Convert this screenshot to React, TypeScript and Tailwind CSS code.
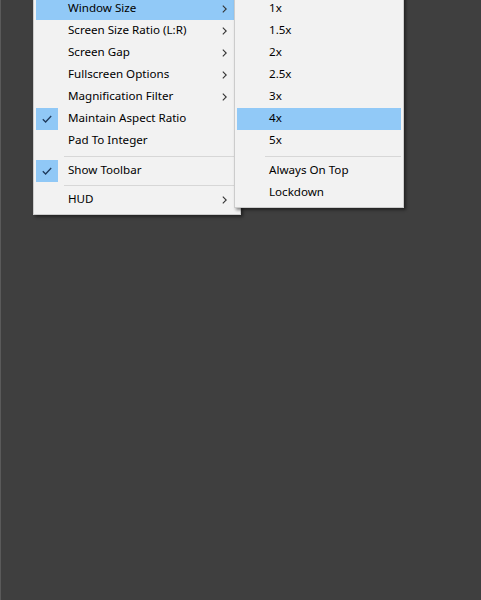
import React from "react";

type Item =
  | { kind: "item"; label: string; checked?: boolean; sub?: boolean; active?: boolean }
  | { kind: "sep"; h: string };

const mainMenu: Item[] = [
  { kind: "item", label: "Window Size", sub: true, active: true },
  { kind: "item", label: "Screen Size Ratio (L:R)", sub: true },
  { kind: "item", label: "Screen Gap", sub: true },
  { kind: "item", label: "Fullscreen Options", sub: true },
  { kind: "item", label: "Magnification Filter", sub: true },
  { kind: "item", label: "Maintain Aspect Ratio", checked: true },
  { kind: "item", label: "Pad To Integer" },
  { kind: "sep", h: "h-[8px]" },
  { kind: "item", label: "Show Toolbar", checked: true },
  { kind: "sep", h: "h-[7px]" },
  { kind: "item", label: "HUD", sub: true },
];

const sizeMenu: Item[] = [
  { kind: "item", label: "1x" },
  { kind: "item", label: "1.5x" },
  { kind: "item", label: "2x" },
  { kind: "item", label: "2.5x" },
  { kind: "item", label: "3x" },
  { kind: "item", label: "4x", active: true },
  { kind: "item", label: "5x" },
  { kind: "sep", h: "h-[8px]" },
  { kind: "item", label: "Always On Top" },
  { kind: "item", label: "Lockdown" },
];

function Chevron() {
  return (
    <svg width="5" height="8" viewBox="0 0 5 8" className="shrink-0">
      <path d="M0.8 0.6 L4.2 4 L0.8 7.4" fill="none" stroke="#333" strokeWidth="1.1" />
    </svg>
  );
}

function Check() {
  return (
    <svg width="10" height="8" viewBox="0 0 10 8">
      <path d="M0.8 4.2 L3.6 7 L9.2 1" fill="none" stroke="#1f3a5c" strokeWidth="1.3" />
    </svg>
  );
}

function Menu({ items, className }: { items: Item[]; className: string }) {
  return (
    <div
      className={
        "absolute bg-[#f2f2f2] border border-[#cccccc] px-[2px] py-[3px] shadow-[2px_2px_3px_rgba(0,0,0,0.45)] " +
        className
      }
    >
      {items.map((it, i) =>
        it.kind === "sep" ? (
          <div key={i} className={it.h + " flex items-center pl-[28px]"}>
            <div className="h-px w-full bg-[#d7d7d7]" />
          </div>
        ) : (
          <div
            key={i}
            className={
              "h-[22px] flex items-center " + (it.active ? "bg-[#91c9f7]" : "")
            }
          >
            <div className="w-[22px] h-[22px] flex items-center justify-center shrink-0">
              {it.checked && (
                <div className="w-[22px] h-[22px] bg-[#90c8f6] flex items-center justify-center">
                  <Check />
                </div>
              )}
            </div>
            <span className="ml-[10px] pb-[2px] flex-1 text-[11.6px] text-black leading-none whitespace-nowrap">
              {it.label}
            </span>
            {it.sub && (
              <div className="w-[16px] flex items-center justify-start">
                <Chevron />
              </div>
            )}
          </div>
        )
      )}
    </div>
  );
}

export default function App() {
  return (
    <div
      className="relative w-[481px] h-[600px] overflow-hidden bg-[#3f3f3f] border-l border-[#5a5a5a]"
      style={{ fontFamily: '"Noto Sans", "Segoe UI", sans-serif' }}
    >
      <Menu items={mainMenu} className="left-[32px] top-[-6px] w-[208px]" />
      <Menu items={sizeMenu} className="left-[233px] top-[-6px] w-[170px]" />
    </div>
  );
}
